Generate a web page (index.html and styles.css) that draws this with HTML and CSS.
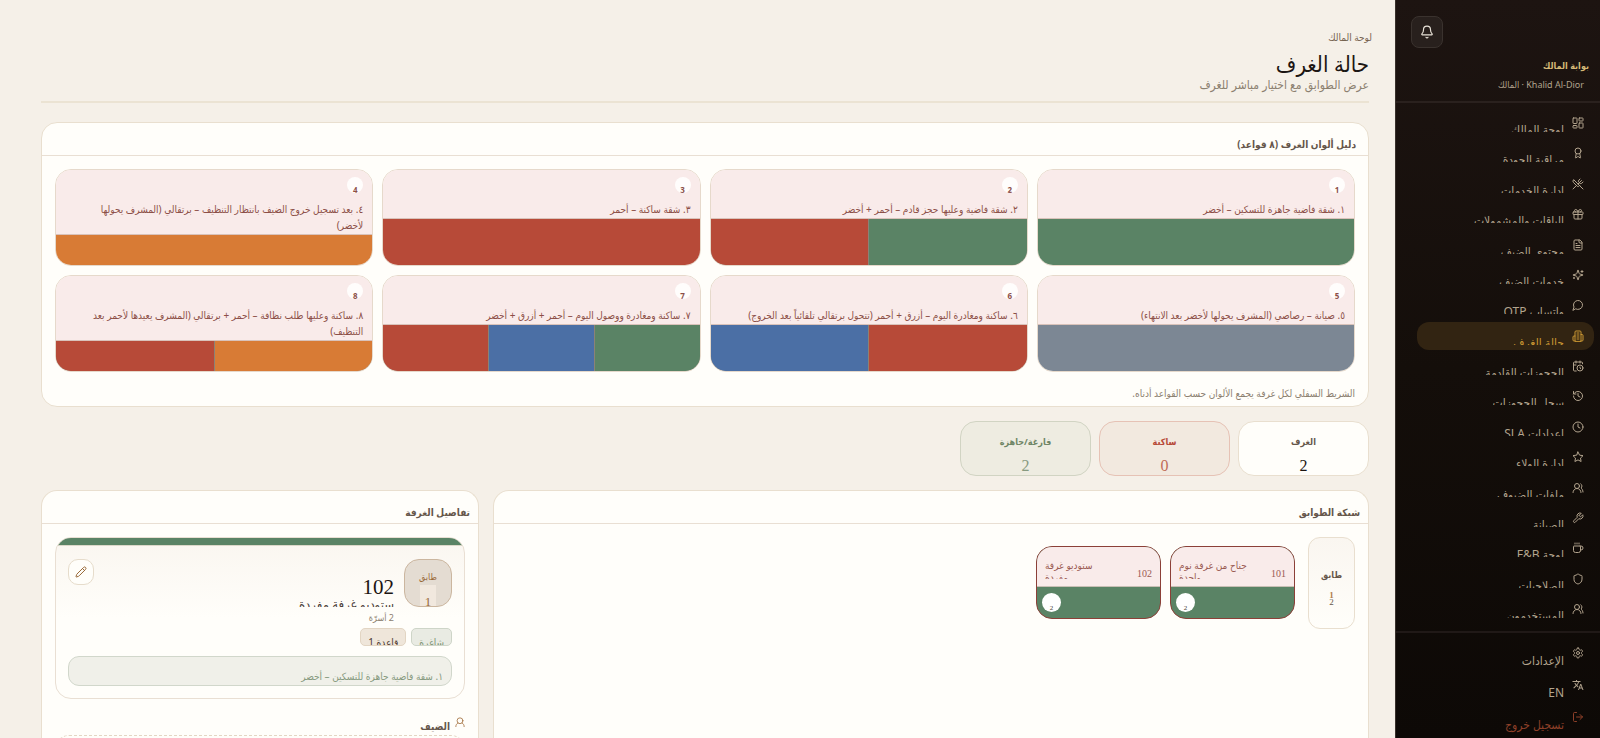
FILE: index.html
```html
<!DOCTYPE html>
<html lang="ar" dir="rtl">
<head>
<meta charset="utf-8">
<meta name="viewport" content="width=device-width, initial-scale=1">
<title>حالة الغرف</title>
<link rel="stylesheet" href="styles.css">
</head>
<body>
<div class="app">
  <aside class="sidebar">
    <div class="side-head">
      <button class="bell" type="button" aria-label="الإشعارات"><svg class="icon" viewBox="0 0 24 24"><path d="M10.27 21a2 2 0 0 0 3.46 0"/><path d="M3.26 15.33A1 1 0 0 0 4 17h16a1 1 0 0 0 .74-1.67C19.41 13.96 18 12.5 18 8A6 6 0 0 0 6 8c0 4.5-1.41 5.96-2.74 7.33"/></svg></button>
      <div class="brand">بوابة المالك</div>
      <div class="user">Khalid Al-Dior · المالك</div>
    </div>
    <nav class="nav">
      <a class="nav-item" href="#"><svg class="icon" viewBox="0 0 24 24"><rect x="2" y="2" width="8" height="11" rx="1"/><rect x="14" y="2" width="8" height="6" rx="1"/><rect x="14" y="12" width="8" height="10" rx="1"/><rect x="2" y="17" width="8" height="5" rx="1"/></svg><span class="nav-label">لوحة المالك</span></a>
      <a class="nav-item" href="#"><svg class="icon" viewBox="0 0 24 24"><circle cx="12" cy="8" r="6"/><path d="m15.5 12.9 1.5 8.5a.5.5 0 0 1-.8.5l-3.6-2.7a1 1 0 0 0-1.2 0l-3.6 2.7a.5.5 0 0 1-.8-.5l1.5-8.5"/></svg><span class="nav-label">مراقبة الجودة</span></a>
      <a class="nav-item" href="#"><svg class="icon" viewBox="0 0 24 24"><path d="m16 2-2.3 2.3a3 3 0 0 0 0 4.2l1.8 1.8a3 3 0 0 0 4.2 0L22 8"/><path d="M15 15 3.3 3.3a4.2 4.2 0 0 0 0 6l7.3 7.3c.7.7 2 .7 2.8 0L15 15Zm0 0 7 7"/><path d="m2.1 21.8 6.4-6.3"/><path d="m19 5-7 7"/></svg><span class="nav-label">إدارة الخدمات</span></a>
      <a class="nav-item" href="#"><svg class="icon" viewBox="0 0 24 24"><rect x="2" y="8" width="20" height="5" rx="1"/><path d="M12 8v14M20 13v7a2 2 0 0 1-2 2H6a2 2 0 0 1-2-2v-7"/><path d="M7.5 8a2.5 2.5 0 0 1 0-5A4.8 8 0 0 1 12 8a4.8 8 0 0 1 4.5-5 2.5 2.5 0 0 1 0 5"/></svg><span class="nav-label">الباقات والمشمولات</span></a>
      <a class="nav-item" href="#"><svg class="icon" viewBox="0 0 24 24"><path d="M15 2H6a2 2 0 0 0-2 2v16a2 2 0 0 0 2 2h12a2 2 0 0 0 2-2V7Z"/><path d="M14 2v4a2 2 0 0 0 2 2h4M10 9H8M16 13H8M16 17H8"/></svg><span class="nav-label">محتوى الضيف</span></a>
      <a class="nav-item" href="#"><svg class="icon" viewBox="0 0 24 24"><path d="M9.94 15.5A2 2 0 0 0 8.5 14.06l-6.14-1.58a.5.5 0 0 1 0-.96L8.5 9.94A2 2 0 0 0 9.94 8.5l1.58-6.14a.5.5 0 0 1 .96 0l1.58 6.14a2 2 0 0 0 1.44 1.44l6.14 1.58a.5.5 0 0 1 0 .96l-6.14 1.58a2 2 0 0 0-1.44 1.44l-1.58 6.14a.5.5 0 0 1-.96 0z"/><path d="M20 3v4M22 5h-4M4 17v2M5 18H3"/></svg><span class="nav-label">خدمات الضيف</span></a>
      <a class="nav-item" href="#"><svg class="icon" viewBox="0 0 24 24"><path d="M7.9 20A9 9 0 1 0 4 16.1L2 22Z"/></svg><span class="nav-label">واتساب OTP</span></a>
      <a class="nav-item active" href="#" aria-current="page"><svg class="icon" viewBox="0 0 24 24"><path d="M6 22V4a2 2 0 0 1 2-2h8a2 2 0 0 1 2 2v18Z"/><path d="M6 12H4a2 2 0 0 0-2 2v6a2 2 0 0 0 2 2h2M18 9h2a2 2 0 0 1 2 2v9a2 2 0 0 1-2 2h-2M10 6h4M10 10h4M10 14h4M10 18h4"/></svg><span class="nav-label">حالة الغرف</span></a>
      <a class="nav-item" href="#"><svg class="icon" viewBox="0 0 24 24"><path d="M21 7.5V6a2 2 0 0 0-2-2H5a2 2 0 0 0-2 2v14a2 2 0 0 0 2 2h3.5M16 2v4M8 2v4M3 10h5M17.5 17.5 16 16.3V14"/><circle cx="16" cy="16" r="6"/></svg><span class="nav-label">الحجوزات القادمة</span></a>
      <a class="nav-item" href="#"><svg class="icon" viewBox="0 0 24 24"><path d="M3 12a9 9 0 1 0 9-9 9.75 9.75 0 0 0-6.74 2.74L3 8"/><path d="M3 3v5h5M12 7v5l4 2"/></svg><span class="nav-label">سجل الحجوزات</span></a>
      <a class="nav-item" href="#"><svg class="icon" viewBox="0 0 24 24"><circle cx="12" cy="12" r="10"/><path d="M12 6v6l4 2"/></svg><span class="nav-label">إعدادات SLA</span></a>
      <a class="nav-item" href="#"><svg class="icon" viewBox="0 0 24 24"><path d="m12 2 3.1 6.3 6.9 1-5 4.9 1.2 6.8-6.2-3.2L5.8 21 7 14.2l-5-4.9 6.9-1Z"/></svg><span class="nav-label">إدارة الولاء</span></a>
      <a class="nav-item" href="#"><svg class="icon" viewBox="0 0 24 24"><path d="M18 21a8 8 0 0 0-16 0"/><circle cx="10" cy="8" r="5"/><path d="M22 20c0-3.37-2-6.5-4-8a5 5 0 0 0-.45-8.3"/></svg><span class="nav-label">ملفات الضيوف</span></a>
      <a class="nav-item" href="#"><svg class="icon" viewBox="0 0 24 24"><path d="M14.7 6.3a1 1 0 0 0 0 1.4l1.6 1.6a1 1 0 0 0 1.4 0l3.77-3.77a6 6 0 0 1-7.94 7.94l-6.91 6.91a2.12 2.12 0 0 1-3-3l6.91-6.91a6 6 0 0 1 7.94-7.94l-3.76 3.76z"/></svg><span class="nav-label">الصيانة</span></a>
      <a class="nav-item" href="#"><svg class="icon" viewBox="0 0 24 24"><path d="M10 2v2M14 2v2M6 2v2M16 8a1 1 0 0 1 1 1v8a4 4 0 0 1-4 4H7a4 4 0 0 1-4-4V9a1 1 0 0 1 1-1h14a4 4 0 1 1 0 8h-1"/></svg><span class="nav-label">لوحة F&amp;B</span></a>
      <a class="nav-item" href="#"><svg class="icon" viewBox="0 0 24 24"><path d="M20 13c0 5-3.5 7.5-7.66 8.95a1 1 0 0 1-.67-.01C7.5 20.5 4 18 4 13V6a1 1 0 0 1 1-1c2 0 4.5-1.2 6.24-2.72a1.17 1.17 0 0 1 1.52 0C14.51 3.81 17 5 19 5a1 1 0 0 1 1 1z"/></svg><span class="nav-label">الصلاحيات</span></a>
      <a class="nav-item" href="#"><svg class="icon" viewBox="0 0 24 24"><path d="M18 21a8 8 0 0 0-16 0"/><circle cx="10" cy="8" r="5"/><path d="M22 20c0-3.37-2-6.5-4-8a5 5 0 0 0-.45-8.3"/></svg><span class="nav-label">المستخدمون</span></a>
    </nav>
    <div class="side-foot">
      <a class="foot-item" href="#"><svg class="icon" viewBox="0 0 24 24"><path d="M12.22 2h-.44a2 2 0 0 0-2 2v.18a2 2 0 0 1-1 1.73l-.43.25a2 2 0 0 1-2 0l-.15-.08a2 2 0 0 0-2.73.73l-.22.38a2 2 0 0 0 .73 2.73l.15.1a2 2 0 0 1 1 1.72v.51a2 2 0 0 1-1 1.74l-.15.09a2 2 0 0 0-.73 2.73l.22.38a2 2 0 0 0 2.73.73l.15-.08a2 2 0 0 1 2 0l.43.25a2 2 0 0 1 1 1.73V20a2 2 0 0 0 2 2h.44a2 2 0 0 0 2-2v-.18a2 2 0 0 1 1-1.73l.43-.25a2 2 0 0 1 2 0l.15.08a2 2 0 0 0 2.73-.73l.22-.39a2 2 0 0 0-.73-2.73l-.15-.08a2 2 0 0 1-1-1.74v-.5a2 2 0 0 1 1-1.74l.15-.09a2 2 0 0 0 .73-2.73l-.22-.38a2 2 0 0 0-2.73-.73l-.15.08a2 2 0 0 1-2 0l-.43-.25a2 2 0 0 1-1-1.73V4a2 2 0 0 0-2-2z"/><circle cx="12" cy="12" r="3"/></svg><span>الإعدادات</span></a>
      <button class="foot-item" type="button"><svg class="icon solid" viewBox="0 0 24 24"><path d="m12.87 15.07-2.54-2.51.03-.03A17.52 17.52 0 0 0 14.07 6H17V4h-7V2H8v2H1v2h11.17C11.5 7.92 10.44 9.75 9 11.35 8.07 10.32 7.3 9.19 6.69 8h-2c.73 1.63 1.73 3.17 2.98 4.56l-5.09 5.02L4 19l5-5 3.11 3.11.76-2.04zM18.5 10h-2L12 22h2l1.12-3h4.75L21 22h2l-4.5-12zm-2.62 7 1.62-4.33L19.12 17h-3.24z"/></svg><span>EN</span></button>
      <button class="foot-item logout" type="button"><svg class="icon" viewBox="0 0 24 24"><path d="M9 21H5a2 2 0 0 1-2-2V5a2 2 0 0 1 2-2h4M16 17l5-5-5-5M21 12H9"/></svg><span>تسجيل خروج</span></button>
    </div>
  </aside>

  <main class="main">
    <header class="page-head">
      <div class="eyebrow">لوحة المالك</div>
      <h1 class="title">حالة الغرف</h1>
      <p class="subtitle">عرض الطوابق مع اختيار مباشر للغرف</p>
    </header>

    <section class="card">
      <h2 class="card-title legend-title">دليل ألوان الغرف (٨ قواعد)</h2>
      <div class="card-body legend-body">
        <div class="rules">
          <article class="rule"><div class="rule-top"><span class="num">1</span><p class="rule-text">١. شقة فاضية جاهزة للتسكين – أخضر</p></div><div class="band"><i class="green"></i></div></article>
          <article class="rule"><div class="rule-top"><span class="num">2</span><p class="rule-text">٢. شقة فاضية وعليها حجز قادم – أحمر + أخضر</p></div><div class="band"><i class="green"></i><i class="red"></i></div></article>
          <article class="rule"><div class="rule-top"><span class="num">3</span><p class="rule-text">٣. شقة ساكنة – أحمر</p></div><div class="band"><i class="red"></i></div></article>
          <article class="rule"><div class="rule-top"><span class="num">4</span><p class="rule-text">٤. بعد تسجيل خروج الضيف بانتظار التنظيف – برتقالي (المشرف يحولها لأخضر)</p></div><div class="band"><i class="orange"></i></div></article>
          <article class="rule"><div class="rule-top"><span class="num">5</span><p class="rule-text">٥. صيانة – رصاصي (المشرف يحولها لأخضر بعد الانتهاء)</p></div><div class="band"><i class="gray"></i></div></article>
          <article class="rule"><div class="rule-top"><span class="num">6</span><p class="rule-text">٦. ساكنة ومغادرة اليوم – أزرق + أحمر (تتحول برتقالي تلقائياً بعد الخروج)</p></div><div class="band"><i class="red"></i><i class="blue"></i></div></article>
          <article class="rule"><div class="rule-top"><span class="num">7</span><p class="rule-text">٧. ساكنة ومغادرة ووصول اليوم – أحمر + أزرق + أخضر</p></div><div class="band"><i class="green"></i><i class="blue"></i><i class="red"></i></div></article>
          <article class="rule"><div class="rule-top"><span class="num">8</span><p class="rule-text">٨. ساكنة وعليها طلب نظافة – أحمر + برتقالي (المشرف يعيدها لأحمر بعد التنظيف)</p></div><div class="band"><i class="orange"></i><i class="red"></i></div></article>
        </div>
        <p class="note">الشريط السفلي لكل غرفة يجمع الألوان حسب القواعد أدناه.</p>
      </div>
    </section>

    <section class="stats">
      <div class="stat"><span class="stat-label">الغرف</span><span class="stat-value">2</span></div>
      <div class="stat occupied"><span class="stat-label">ساكنة</span><span class="stat-value">0</span></div>
      <div class="stat free"><span class="stat-label">فارغة/جاهزة</span><span class="stat-value">2</span></div>
    </section>

    <div class="panels">
      <section class="card">
        <h2 class="card-title">شبكة الطوابق</h2>
        <div class="card-body floor">
          <div class="floor-tag"><span>طابق</span><b>1</b><small>2</small></div>
          <div class="rooms">
            <button class="room" type="button"><span class="room-top"><span class="room-no">101</span><span class="room-name">جناح من غرفة نوم واحدة</span></span><span class="room-band"><span class="dot">2</span></span></button>
            <button class="room" type="button"><span class="room-top"><span class="room-no">102</span><span class="room-name">ستوديو غرفة مفردة</span></span><span class="room-band"><span class="dot">2</span></span></button>
          </div>
        </div>
      </section>

      <section class="card">
        <h2 class="card-title">تفاصيل الغرفة</h2>
        <div class="card-body">
          <div class="detail">
            <div class="detail-strip"></div>
            <div class="detail-body">
              <div class="detail-row">
                <div class="floor-badge"><span>طابق</span><b>1</b></div>
                <div class="detail-info">
                  <div class="detail-no">102</div>
                  <div class="detail-name">ستوديو غرفة مفردة</div>
                  <div class="beds">2 أسرّة</div>
                </div>
                <button class="edit" type="button" aria-label="تعديل"><svg class="icon" viewBox="0 0 24 24"><path d="M21.17 6.81a1 1 0 0 0-3.99-3.99L3.84 16.17a2 2 0 0 0-.5.83l-1.32 4.35a.5.5 0 0 0 .62.62l4.35-1.32a2 2 0 0 0 .83-.5zM15 5l4 4"/></svg></button>
              </div>
              <div class="tags"><span class="tag vacant">شاغرة</span><span class="tag">قاعدة 1</span></div>
              <div class="state">١. شقة فاضية جاهزة للتسكين – أخضر</div>
            </div>
          </div>
          <h3 class="guest-title"><svg class="icon" viewBox="0 0 24 24"><circle cx="12" cy="9" r="7"/><path d="M2 23c0-4 2-7 5-8.500M22 23c0-4-2-7-5-8.500"/></svg><span>الضيف</span></h3>
          <div class="guest-box"></div>
        </div>
      </section>
    </div>
  </main>
</div>
</body>
</html>
```

FILE: styles.css
```css
* { box-sizing: border-box; }

body {
  margin: 0;
  background: #f5f0e8;
  color: #1c1512;
  font-family: "Noto Sans", "DejaVu Sans Condensed", "DejaVu Sans", sans-serif;
  font-size: 11px;
}

h1, h2, h3, p { margin: 0; }
button { font: inherit; color: inherit; padding: 0; cursor: pointer; }
a { color: inherit; text-decoration: none; }

.icon {
  width: 12px;
  height: 12px;
  flex: none;
  fill: none;
  stroke: currentColor;
  stroke-width: 2;
  stroke-linecap: round;
  stroke-linejoin: round;
}
.icon.solid { fill: currentColor; stroke: none; }

.app { display: flex; height: 100vh; overflow: hidden; }

/* Sidebar */
.sidebar {
  width: 205px;
  flex: none;
  display: flex;
  flex-direction: column;
  border-left: 1px solid #38302b;
  background: linear-gradient(#1d1411, #140e0a 50%, #0d0906);
  color: #b3a48e;
}
.side-head {
  height: 103px;
  flex: none;
  padding: 16px 16px 0 15px;
  border-bottom: 2px solid #2a211e;
}
.bell {
  display: grid;
  place-items: center;
  width: 32px;
  height: 32px;
  margin-right: auto;
  border: 1px solid #3a322e;
  border-radius: 8px;
  background: #28201d;
  color: #e8e2d8;
}
.bell .icon { width: 14px; height: 14px; }
.brand {
  margin: 9px -5px 0 0;
  line-height: 18px;
  font-size: 9px;
  font-weight: 700;
  color: #d5b977;
}
.user { line-height: 20px; font-size: 9px; }

.nav {
  flex: 1;
  min-height: 0;
  padding: 6px 6px 8px 21px;
  display: flex;
  flex-direction: column;
  justify-content: space-between;
}
.nav-item {
  display: flex;
  gap: 8px;
  height: 28px;
  padding: 0 10px;
  border-radius: 12px;
}
.nav-item .icon { margin-top: 8px; }
.nav-label {
  height: 23px;
  padding-top: 10px;
  overflow: hidden;
  line-height: 22px;
  font-size: 12px;
  white-space: nowrap;
}
.nav-item.active { background: #322412; color: #c99632; }

.side-foot {
  flex: none;
  display: flex;
  flex-direction: column;
  gap: 2px;
  padding: 11px 16px 0 20px;
  border-top: 2px solid #201917;
}
.foot-item {
  display: flex;
  gap: 8px;
  width: 100%;
  height: 30px;
  border: 0;
  background: none;
  font-size: 12px;
  text-align: right;
}
.foot-item .icon { margin-top: 3px; }
.foot-item span { padding-top: 7px; line-height: 20px; }
.foot-item.logout { color: #8f4029; }

/* Main column */
.main {
  flex: 1;
  min-width: 0;
  display: flex;
  flex-direction: column;
  gap: 14px;
  padding: 28px 26px 0 41px;
  overflow: hidden;
}
.page-head {
  flex: none;
  height: 75px;
  margin-bottom: 5px;
  border-bottom: 2px solid #ebe3d3;
}
.eyebrow { margin-right: -3px; line-height: 18px; font-size: 10px; color: #756350; }
.title { margin-top: 3px; line-height: 28px; font-size: 22px; font-weight: 500; }
.subtitle { line-height: 16px; font-size: 12px; color: #8c8070; }

.card {
  flex: none;
  min-width: 0;
  border: 1px solid #e9dfcf;
  border-radius: 16px;
  background: #fffefa;
  overflow: hidden;
}
.card-title {
  height: 33px;
  padding: 11px 8px 0;
  border-bottom: 1px solid #e9dfd3;
  line-height: 20px;
  font-size: 10px;
  font-weight: 700;
  color: #65564a;
}
.legend-title { padding-right: 12px; }
.card-body { padding: 13px; }
.legend-body { padding-bottom: 5px; }

.rules {
  display: grid;
  grid-template-columns: repeat(4, minmax(0, 1fr));
  gap: 9px;
}
.rule {
  display: flex;
  flex-direction: column;
  height: 97px;
  border: 1px solid #e6d9cb;
  border-radius: 16px;
  overflow: hidden;
}
.rule-top {
  padding: 7px 9px 1px 20px;
  background: #f9ebea;
  color: #8c4f47;
  border-bottom: 1px solid #d9c2ba;
}
.num {
  display: block;
  width: 16px;
  height: 16px;
  padding-top: 5px;
  border-radius: 50%;
  background: #fffdfc;
  overflow: hidden;
  line-height: 15px;
  font-size: 8px;
  font-weight: 700;
  text-align: center;
}
.rule-text { margin-top: 8px; line-height: 16px; font-size: 10px; }
.band { flex: 1; display: flex; gap: 1px; background: #8b8276; }
.band i { flex: 1; }
.green { background: #5a8365; }
.red { background: #b74a38; }
.orange { background: #d87b35; }
.blue { background: #4b6fa5; }
.gray { background: #7c8794; }
.note { margin-top: 13px; line-height: 16px; font-size: 10px; color: #8c8070; }

.stats { flex: none; display: flex; gap: 8px; }
.stat {
  width: 131px;
  height: 55px;
  padding-top: 11px;
  display: flex;
  flex-direction: column;
  align-items: center;
  border: 1px solid #e9dfcf;
  border-radius: 16px;
  background: #fffefa;
}
.stat-label { line-height: 18px; font-size: 9px; font-weight: 700; color: #65564a; }
.stat-value { margin-top: 5px; font: 16px/20px "Liberation Serif", serif; }
.occupied { background: #f2e9df; border-color: #e6c2b5; }
.occupied .stat-label { color: #b74a38; }
.occupied .stat-value { color: #c06b57; }
.free { background: #eeece1; border-color: #d1d4c3; }
.free .stat-label { color: #6f8565; }
.free .stat-value { color: #879a80; }

.panels {
  flex: 1 0 auto;
  display: grid;
  grid-template-columns: minmax(0, 2fr) minmax(0, 1fr);
  gap: 14px;
}
.panels .card { border-bottom: 0; border-radius: 16px 16px 0 0; }

/* Floors */
.floor { display: flex; align-items: flex-start; gap: 13px; }
.floor-tag {
  display: flex;
  flex-direction: column;
  align-items: center;
  width: 47px;
  height: 92px;
  padding-top: 28px;
  border: 1px solid #e9dfcf;
  border-radius: 12px;
  background: linear-gradient(#faf6f0, #fffefa);
  line-height: 18px;
  font-size: 9px;
  font-weight: 700;
  color: #65564a;
}
.floor-tag b { margin-top: 8px; font: 700 9px/7px "Liberation Serif", serif; color: #b08050; }
.floor-tag small { font: 9px/7px "Liberation Serif", serif; }
.rooms { display: flex; gap: 9px; padding-top: 9px; }
.room {
  display: flex;
  flex-direction: column;
  width: 125px;
  height: 73px;
  border: 1px solid #8c4038;
  border-radius: 16px;
  background: #5a8365;
  overflow: hidden;
  color: #9a5a52;
}
.room-top {
  display: flex;
  justify-content: space-between;
  gap: 21px;
  width: 100%;
  height: 40px;
  padding: 12px 8px 7px;
  border-bottom: 1px solid #c9bfb5;
  background: #f9ebea;
}
.room-no { align-self: flex-end; flex: none; font: 10px/10px "Liberation Serif", serif; }
.room-name {
  flex: 1;
  overflow: hidden;
  line-height: 12px;
  font-size: 10px;
  text-align: left;
}
.room-band { display: flex; justify-content: flex-end; width: 100%; padding: 6px 5px; }
.dot {
  width: 19px;
  height: 19px;
  padding-top: 10px;
  border-radius: 50%;
  background: #fff;
  font: 7px/10px "Liberation Serif", serif;
  color: #4b4038;
  text-align: center;
}

/* Room details */
.detail {
  border: 1px solid #e9dfd3;
  border-radius: 16px;
  background: linear-gradient(#faf6f0, #fffefa 50%);
  overflow: hidden;
}
.detail-strip { height: 8px; background: #5a8365; border-bottom: 1px solid #dcd8c9; }
.detail-body { padding: 13px 12px 12px; }
.detail-row { display: flex; gap: 10px; align-items: flex-start; }
.floor-badge {
  display: flex;
  flex-direction: column;
  align-items: center;
  width: 48px;
  height: 48px;
  padding-top: 9px;
  border: 1px solid #cbb69f;
  border-radius: 15px;
  background: #e4dcd2;
  overflow: hidden;
  line-height: 16px;
  font-size: 9px;
  color: #986838;
}
.floor-badge b {
  width: 16px;
  height: 28px;
  padding-top: 9px;
  background: #f1e8de;
  font: 13px/16px "Liberation Serif", serif;
  text-align: center;
}
.detail-info { flex: 1; min-width: 0; }
.detail-no { padding-top: 17px; font: 21px/22px "Liberation Serif", serif; }
.detail-name { height: 9px; overflow: hidden; line-height: 13px; font-size: 13px; color: #4b4038; }
.beds { margin-top: 3px; line-height: 16px; font-size: 9px; color: #8c8070; }
.edit {
  display: grid;
  place-items: center;
  width: 26px;
  height: 26px;
  border: 1px solid #e6dccb;
  border-radius: 10px;
  background: #fffefa;
  color: #986838;
}
.tags { display: flex; gap: 5px; margin-top: 2px; }
.tag {
  height: 18px;
  padding: 5px 7px 0;
  border: 1px solid #e2d5c3;
  border-radius: 5px;
  background: #efe6da;
  overflow: hidden;
  line-height: 16px;
  font-size: 10px;
  color: #4b382e;
}
.tag.vacant { background: #e9ebe3; border-color: #ced5c8; color: #7c9272; }
.state {
  height: 30px;
  margin-top: 10px;
  padding: 9px 8px 0;
  border: 1px solid #d1d7cb;
  border-radius: 11px;
  background: #f0f0e9;
  line-height: 20px;
  font-size: 10px;
  color: #879a80;
}
.guest-title {
  display: flex;
  gap: 5px;
  height: 36px;
  padding-top: 16px;
  line-height: 22px;
  font-size: 10px;
  color: #65564a;
}
.guest-title .icon { width: 10px; height: 10px; margin-top: 2px; color: #a2703f; }
.guest-box { height: 90px; border: 1px dashed #e4d6c3; border-radius: 14px; }
```
